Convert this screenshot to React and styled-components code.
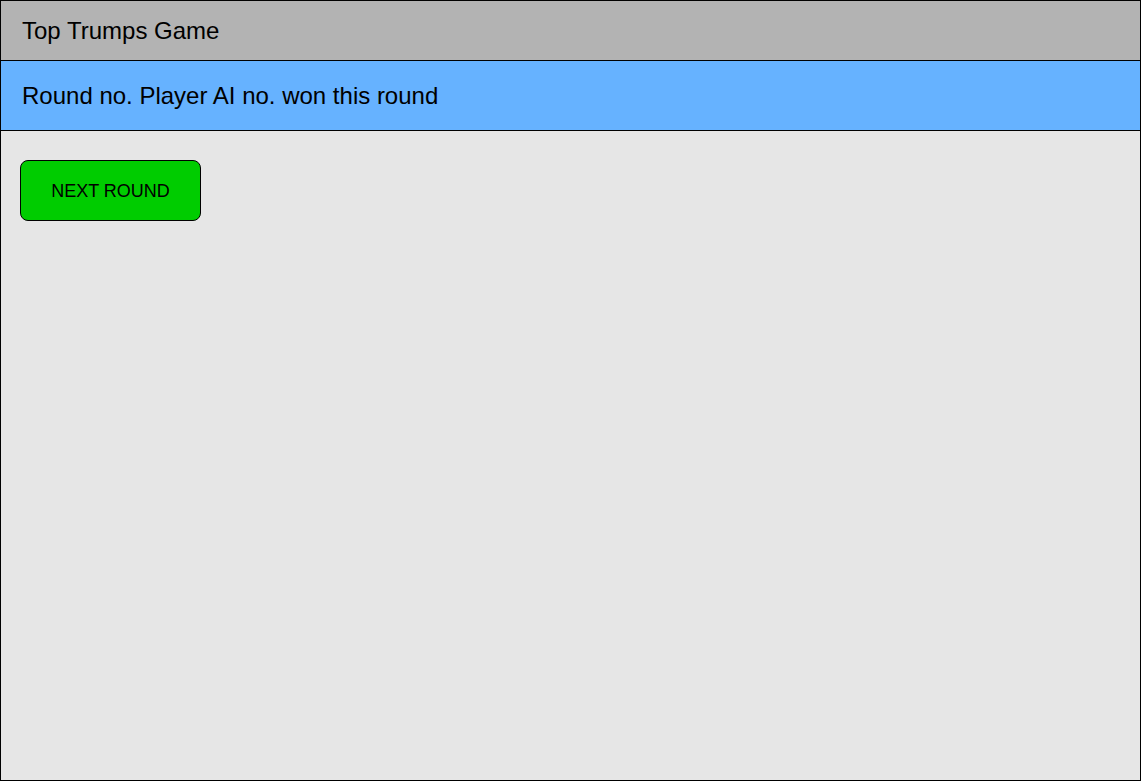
import React from 'react';
import styled, { createGlobalStyle } from 'styled-components';

const GlobalStyle = createGlobalStyle`
  body {
    margin: 0;
    background: #ffffff;
    font-family: "Liberation Sans", Arial, Helvetica, sans-serif;
  }
`

export default function App() {
    return (
        <>
            <GlobalStyle />
            <Frame>
                <TitleBar>Top Trumps Game</TitleBar>
                <StatusBar>Round no. Player AI no. won this round</StatusBar>
                <Board>
                    <NextButton>NEXT ROUND</NextButton>
                </Board>
            </Frame>
        </>
    );
}

const Frame = styled.div`
    display: flex;
    flex-direction: column;
    box-sizing: border-box;
    width: 1141px;
    height: 781px;
    border: 1px solid #000;
    background: #e6e6e6;
`

const TitleBar = styled.div`
    display: flex;
    align-items: center;
    box-sizing: border-box;
    height: 60px;
    padding: 1px 0 0 21px;
    background: #b3b3b3;
    border-bottom: 1px solid #000;
    font-size: 24px;
    color: #000;
`

const StatusBar = styled.div`
    display: flex;
    align-items: center;
    box-sizing: border-box;
    height: 70px;
    padding: 1px 0 0 21px;
    background: #66b2ff;
    border-bottom: 1px solid #000;
    font-size: 24px;
    color: #000;
`

const Board = styled.div`
    flex: 1;
    display: flex;
    align-items: flex-start;
    padding: 29px 19px;
`

const NextButton = styled.button`
    box-sizing: border-box;
    width: 181px;
    height: 61px;
    padding: 2px 0 0;
    background: #00cc00;
    border: 1px solid #000;
    border-radius: 8px;
    font-family: "Liberation Sans", Arial, Helvetica, sans-serif;
    font-size: 18px;
    color: #000;
    cursor: pointer;
`
